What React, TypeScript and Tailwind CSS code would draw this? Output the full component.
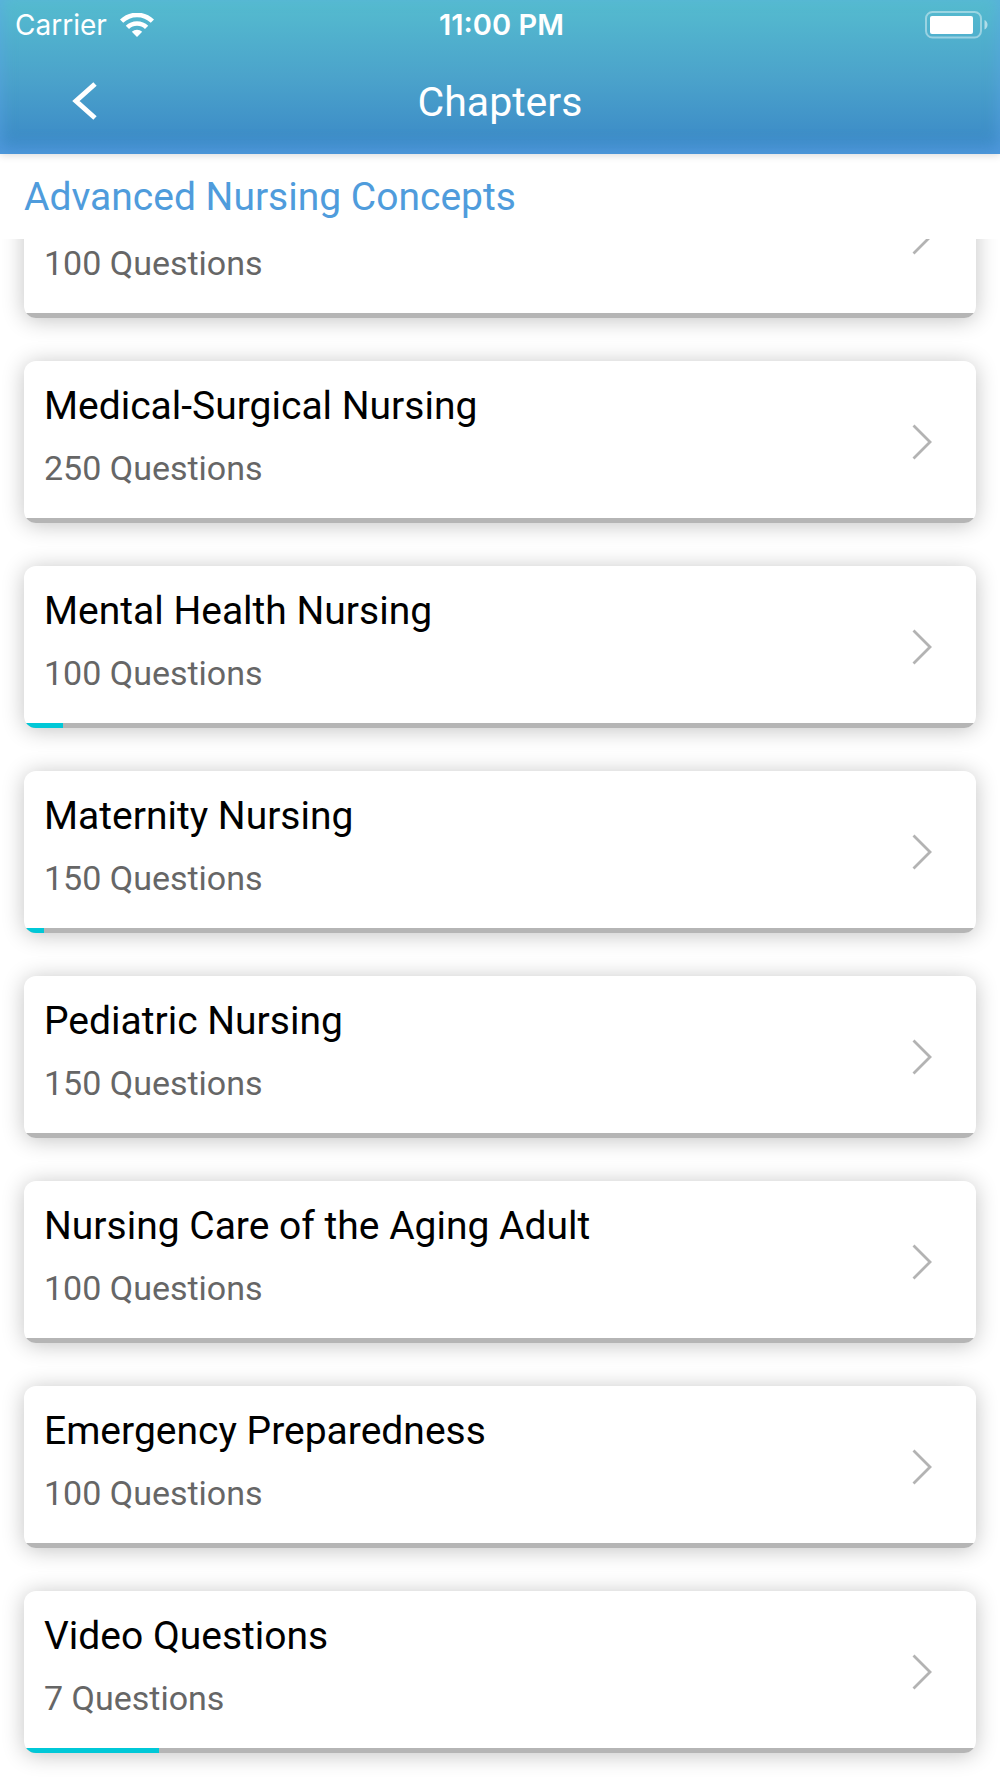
type Chapter = { title: string; questions: number; progress: number };

const chapters: Chapter[] = [
  { title: "", questions: 100, progress: 0 },
  { title: "Medical-Surgical Nursing", questions: 250, progress: 0 },
  { title: "Mental Health Nursing", questions: 100, progress: 4.1 },
  { title: "Maternity Nursing", questions: 150, progress: 2.1 },
  { title: "Pediatric Nursing", questions: 150, progress: 0 },
  { title: "Nursing Care of the Aging Adult", questions: 100, progress: 0 },
  { title: "Emergency Preparedness", questions: 100, progress: 0 },
  { title: "Video Questions", questions: 7, progress: 14.2 },
];

function WifiIcon() {
  return (
    <svg width="34" height="24" viewBox="0 0 34 24" fill="none" aria-hidden="true">
      <path d="M1.6 8.2 A 22 22 0 0 1 32.4 8.2" stroke="white" strokeWidth="4.6" />
      <path d="M7.4 14.4 A 13.6 13.6 0 0 1 26.6 14.4" stroke="white" strokeWidth="4.6" />
      <path d="M17 24 L11.8 18.8 A 7.6 7.6 0 0 1 22.2 18.8 Z" fill="white" />
    </svg>
  );
}

function BatteryIcon() {
  return (
    <svg width="64" height="28" viewBox="0 0 64 28" fill="none" aria-hidden="true">
      <rect x="2" y="1" width="55" height="25.5" rx="6.5" stroke="white" strokeOpacity="0.42" strokeWidth="2" />
      <rect x="6" y="5" width="43" height="18" rx="2" fill="white" />
      <path d="M60.5 9 C64.5 10.5 64.5 17 60.5 18.5 Z" fill="white" fillOpacity="0.55" />
    </svg>
  );
}

function ChapterCard({ title, questions, progress }: Chapter) {
  return (
    <li>
      <button
        type="button"
        className="flex w-full flex-col overflow-hidden rounded-xl bg-white text-left shadow-[0_2px_22px_rgba(0,0,0,0.24)]"
      >
        <span className="flex h-[157px] w-full items-center justify-between pr-11 pl-5">
          <span className="flex flex-col pb-[5px]">
            <span className="h-[62px] text-[39px] leading-[62px] text-black">{title}</span>
            <span className="h-[62px] text-[34px] leading-[62px] text-[#666]">{questions} Questions</span>
          </span>
          <svg width="20" height="36" viewBox="0 0 20 36" fill="none" className="mt-1" aria-hidden="true">
            <path d="M1.5 1.5 L18 18 L1.5 34.5" stroke="#b3b3b3" strokeWidth="2.8" />
          </svg>
        </span>
        <span className="block h-[5px] w-full bg-[#b5b5b5]">
          <span className="block h-full bg-[#00c8d7]" style={{ width: `${progress}%` }} />
        </span>
      </button>
    </li>
  );
}

export default function App() {
  return (
    <div className="flex h-screen flex-col overflow-hidden bg-white font-['Roboto',sans-serif]">
      <header className="relative z-10 flex h-[154px] shrink-0 flex-col bg-linear-to-b from-[#55bccf] via-[#4ba3cb] to-[#3a87c6] text-white shadow-[0_1px_8px_rgba(0,0,0,0.16),inset_0_-6px_16px_rgba(93,165,235,0.65)]">
        <div className="grid h-[50px] grid-cols-3 items-center pr-3 pl-[15px] font-['Inter',sans-serif] text-[28px]">
          <div className="flex items-center gap-[13px]">
            <span>Carrier</span>
            <WifiIcon />
          </div>
          <time className="text-center text-[29px] font-semibold">11:00 PM</time>
          <div className="flex justify-end">
            <BatteryIcon />
          </div>
        </div>
        <div className="grid h-[104px] grid-cols-3 items-center">
          <button type="button" aria-label="Back" className="ml-[72px] w-6">
            <svg width="25" height="40" viewBox="0 0 25 40" fill="none" aria-hidden="true">
              <path d="M23 2 L4 19 L23 36" stroke="white" strokeWidth="5" />
            </svg>
          </button>
          <h1 className="text-center text-[41px] leading-[48px]">Chapters</h1>
        </div>
      </header>
      <h2 className="h-[85px] shrink-0 px-6 text-[39px] leading-[86px] text-[#4f9cdc]">
        Advanced Nursing Concepts
      </h2>
      <main className="min-h-0 flex-1 overflow-hidden px-6">
        <ul className="-mx-6 -mt-[83px] flex flex-col gap-[43px] px-6 pb-6">
          {chapters.map((chapter, index) => (
            <ChapterCard key={index} {...chapter} />
          ))}
        </ul>
      </main>
    </div>
  );
}
